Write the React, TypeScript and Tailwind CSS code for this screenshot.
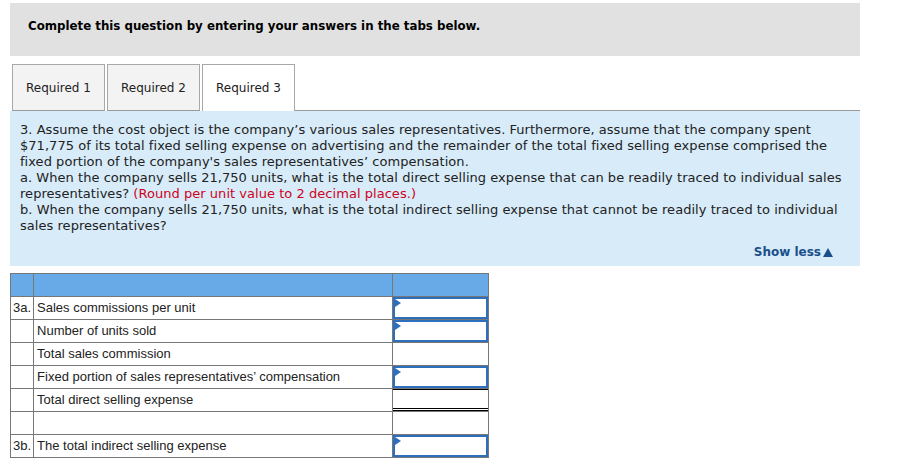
const rows: { label: string; tag?: string; input: boolean; total?: boolean }[] = [
  { tag: "3a.", label: "Sales commissions per unit", input: true },
  { label: "Number of units sold", input: true },
  { label: "Total sales commission", input: false },
  { label: "Fixed portion of sales representatives\u2019 compensation", input: true },
  { label: "Total direct selling expense", input: false, total: true },
  { label: "", input: false },
  { tag: "3b.", label: "The total indirect selling expense", input: true },
];

function Tab({ label, active }: { label: string; active?: boolean }) {
  return (
    <div
      className={
        active
          ? "flex h-[47px] w-[93px] items-center justify-center border border-b-0 border-[#a8a8a8] bg-white text-[12px] text-[#222]"
          : "flex h-[47px] w-[93px] items-center justify-center border border-[#a8a8a8] border-b-[#9a9a9a] bg-[#f3f3f3] text-[12px] text-[#222]"
      }
    >
      {label}
    </div>
  );
}

function AnswerInput() {
  return (
    <div className="relative h-[22px] w-full border-2 border-[#2d6fbd] bg-white">
      <span className="absolute left-0 top-0 h-0 w-0 border-y-[4px] border-l-[6px] border-y-transparent border-l-[#2d6fbd]" />
    </div>
  );
}

export default function App() {
  return (
    <div className="min-h-[467px] bg-white pl-[10px] pt-[3px] font-['DejaVu_Sans',Verdana,sans-serif]">
      <div className="w-[850px]">
        <div className="h-[53px] bg-[#e1e1e1] pl-[18px] pt-[15px] text-[11.8px] leading-[16px] font-bold text-black">
          Complete this question by entering your answers in the tabs below.
        </div>

        <div className="mt-[8px] flex items-end pl-[2px]">
          <div className="flex gap-[2px]">
            <Tab label="Required 1" />
            <Tab label="Required 2" />
            <Tab label="Required 3" active />
          </div>
          <div className="flex-1 border-b border-[#9a9a9a]" />
        </div>

        <div className="flex h-[155px] flex-col bg-[#d7ebf9] px-[10px] pt-[11px]">
          <div className="whitespace-nowrap text-[13px] leading-[16px] tracking-[0.04px] text-[#222]">
            <p>3. Assume the cost object is the company’s various sales representatives. Furthermore, assume that the company spent</p>
            <p>$71,775 of its total fixed selling expense on advertising and the remainder of the total fixed selling expense comprised the</p>
            <p>fixed portion of the company's sales representatives’ compensation.</p>
            <p>a. When the company sells 21,750 units, what is the total direct selling expense that can be readily traced to individual sales</p>
            <p>
              representatives? <span className="text-[#d0021b]">(Round per unit value to 2 decimal places.)</span>
            </p>
            <p>b. When the company sells 21,750 units, what is the total indirect selling expense that cannot be readily traced to individual</p>
            <p>sales representatives?</p>
          </div>
          <div className="mt-auto mb-[6px] flex justify-end pr-[17px]">
            <span className="flex items-center gap-[2px] text-[12px] leading-[16px] font-bold text-[#1a4f8c]">
              Show less
              <svg width="10" height="9" viewBox="0 0 10 9" className="mt-[1px]">
                <path d="M5 0 L10 9 L0 9 Z" fill="#1a4f8c" />
              </svg>
            </span>
          </div>
        </div>

        <table className="mt-[7px] w-[479px] border-collapse font-['Liberation_Sans',Arial,sans-serif] text-[13px] text-[#222]">
          <tbody>
            <tr className="h-[23px] bg-[#68a9e8]">
              <td className="w-[23px] border border-[#777]" />
              <td className="w-[359px] border border-[#777]" />
              <td className="border border-[#777]" />
            </tr>
            {rows.map((r, i) => (
              <tr key={i} className="h-[23px]">
                <td className="border border-[#777] px-[2px] align-middle">{r.tag}</td>
                <td className="border border-[#777] px-[3px] align-middle">{r.label}</td>
                <td className="border border-[#777] p-0 align-middle">
                  {r.input ? (
                    <AnswerInput />
                  ) : r.total ? (
                    <div className="h-[22px] border-t border-b-[3px] border-b-black border-t-black [border-bottom-style:double]" />
                  ) : null}
                </td>
              </tr>
            ))}
          </tbody>
        </table>
      </div>
    </div>
  );
}
